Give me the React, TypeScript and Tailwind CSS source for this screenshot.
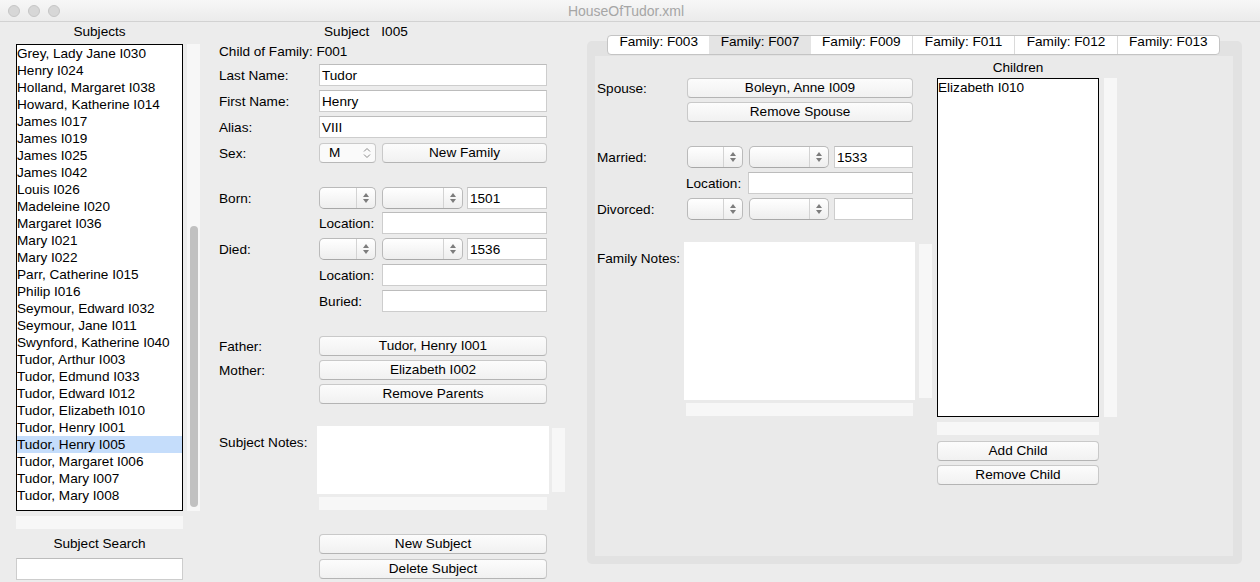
import React from 'react';

const subjects = [
  'Grey, Lady Jane I030', 'Henry I024', 'Holland, Margaret I038', 'Howard, Katherine I014',
  'James I017', 'James I019', 'James I025', 'James I042', 'Louis I026', 'Madeleine I020',
  'Margaret I036', 'Mary I021', 'Mary I022', 'Parr, Catherine I015', 'Philip I016',
  'Seymour, Edward I032', 'Seymour, Jane I011', 'Swynford, Katherine I040', 'Tudor, Arthur I003',
  'Tudor, Edmund I033', 'Tudor, Edward I012', 'Tudor, Elizabeth I010', 'Tudor, Henry I001',
  'Tudor, Henry I005', 'Tudor, Margaret I006', 'Tudor, Mary I007', 'Tudor, Mary I008',
];

const tabs = ['Family: F003', 'Family: F007', 'Family: F009', 'Family: F011', 'Family: F012', 'Family: F013'];

const Button = ({ label, className = '' }: { label: string; className?: string }) => (
  <div className={'h-[20px] flex items-center justify-center rounded-[4px] border border-[#c9c9c9] border-b-[#b4b4b4] bg-linear-to-b from-[#fcfcfc] to-[#f1f1f1] leading-none pb-[1px] ' + className}>
    {label}
  </div>
);

const Field = ({ value = '', className = '' }: { value?: string; className?: string }) => (
  <div className={'h-[22px] bg-white border border-[#cdcdcd] border-t-[#bcbcbc] pl-[2px] flex items-center ' + className}>
    {value}
  </div>
);

// stepper-style combo used for day / month
const Spin = ({ className = '' }: { className?: string }) => (
  <div className={'h-[22px] rounded-[5px] border border-[#bababa] border-b-[#a8a8a8] bg-linear-to-b from-white to-[#eeeeee] flex justify-end ' + className}>
    <div className="w-[19px] border-l border-[#d3d3d3] flex flex-col items-center justify-center gap-[2px]">
      <svg width="6" height="4" viewBox="0 0 6 4"><path d="M3 0L6 4H0z" fill="#7c7c7c" /></svg>
      <svg width="6" height="4" viewBox="0 0 6 4"><path d="M0 0H6L3 4z" fill="#7c7c7c" /></svg>
    </div>
  </div>
);

const Row = ({ label, children, className = '' }: { label: string; children?: React.ReactNode; className?: string }) => (
  <div className={'flex items-center h-[22px] ' + className}>
    <div className="w-[100px] shrink-0">{label}</div>
    {children}
  </div>
);

const Track = ({ className = '' }: { className?: string }) => <div className={'bg-[#f7f7f7] ' + className} />;

export default function App() {
  return (
    <div className="w-[1260px] h-[582px] overflow-hidden bg-[#ececec] text-black text-[13.6px] leading-[17px] font-['Liberation_Sans',Arial,sans-serif]">
      {/* Title bar */}
      <div className="h-[22px] grid grid-cols-[1fr_auto_1fr] items-center border-b border-[#d2d2d2] bg-linear-to-b from-[#f7f7f7] to-[#ebebeb]">
        <div className="flex gap-[8px] pl-[8px]">
          <div className="w-[12px] h-[12px] rounded-full bg-[#d7d7d7] border border-[#c6c6c6]" />
          <div className="w-[12px] h-[12px] rounded-full bg-[#d7d7d7] border border-[#c6c6c6]" />
          <div className="w-[12px] h-[12px] rounded-full bg-[#d7d7d7] border border-[#c6c6c6]" />
        </div>
        <div className="text-[14px] text-[#a6a6a6] pt-[1px] pr-[8px]">HouseOfTudor.xml</div>
        <div />
      </div>

      <div className="flex items-start">
        {/* Subjects column */}
        <div className="ml-[16px] w-[184px] flex flex-col">
          <div className="w-[167px] h-[22px] leading-[20px] text-center">Subjects</div>
          <div className="flex">
            <div className="w-[167px] h-[467px] bg-white border border-black overflow-hidden">
              {subjects.map((s, i) => (
                <div key={i} className={'h-[17px] leading-[17px] whitespace-nowrap ' + (i === 23 ? 'bg-[#c5ddfb]' : '')}>
                  {s}
                </div>
              ))}
            </div>
            <div className="ml-[4px] w-[13px] h-[467px] bg-[#f7f7f7] flex flex-col items-center">
              <div className="mt-[182px] w-[8px] h-[281px] rounded-full bg-[#c1c1c1]" />
            </div>
          </div>
          <Track className="mt-[5px] w-[167px] h-[13px]" />
          <div className="w-[167px] h-[29px] pt-[7px] leading-[16px] text-center">Subject Search</div>
          <div className="w-[167px] h-[22px] bg-white border border-[#cdcdcd] border-t-[#bcbcbc]" />
        </div>

        {/* Subject form */}
        <div className="ml-[19px] w-[346px] flex flex-col">
          <div className="h-[22px] leading-[20px] pl-[105px]">
            Subject<span className="ml-[12px]">I005</span>
          </div>
          <div className="h-[20px] leading-[16px]">Child of Family: F001</div>
          <Row label="Last Name:"><Field value="Tudor" className="w-[228px]" /></Row>
          <Row label="First Name:" className="mt-[4px]"><Field value="Henry" className="w-[228px]" /></Row>
          <Row label="Alias:" className="mt-[4px]"><Field value="VIII" className="w-[228px]" /></Row>
          <Row label="Sex:" className="mt-[4px]">
            <div className="w-[57px] h-[20px] rounded-[4px] border border-[#cacaca] border-b-[#b8b8b8] bg-[#fafafa] flex items-center justify-between pl-[9px] pr-[4px]">
              <span className="leading-none">M</span>
              <svg width="8" height="12" viewBox="0 0 8 12" fill="none" stroke="#8a8a8a" strokeWidth="1">
                <path d="M1 4.5L4 1.5L7 4.5" />
                <path d="M1 7.5L4 10.5L7 7.5" />
              </svg>
            </div>
            <Button label="New Family" className="ml-[6px] w-[165px]" />
          </Row>

          <Row label="Born:" className="mt-[23px]">
            <Spin className="w-[57px]" />
            <Spin className="ml-[6px] w-[81px]" />
            <Field value="1501" className="ml-[4px] w-[80px]" />
          </Row>
          <Row label="" className="mt-[3px]">
            <div className="w-[63px]">Location:</div>
            <Field className="w-[165px]" />
          </Row>
          <Row label="Died:" className="mt-[4px]">
            <Spin className="w-[57px]" />
            <Spin className="ml-[6px] w-[81px]" />
            <Field value="1536" className="ml-[4px] w-[80px]" />
          </Row>
          <Row label="" className="mt-[4px]">
            <div className="w-[63px]">Location:</div>
            <Field className="w-[165px]" />
          </Row>
          <Row label="" className="mt-[4px]">
            <div className="w-[63px]">Buried:</div>
            <Field className="w-[165px]" />
          </Row>

          <div className="flex items-center mt-[24px]">
            <div className="w-[100px]">Father:</div>
            <Button label="Tudor, Henry I001" className="w-[228px]" />
          </div>
          <div className="flex items-center mt-[4px]">
            <div className="w-[100px]">Mother:</div>
            <Button label="Elizabeth I002" className="w-[228px]" />
          </div>
          <Button label="Remove Parents" className="mt-[4px] ml-[100px] w-[228px]" />

          <div className="flex items-start mt-[22px]">
            <div className="w-[98px] pt-[8px]">Subject Notes:</div>
            <div className="w-[232px] h-[68px] bg-white" />
            <Track className="ml-[3px] mt-[2px] w-[13px] h-[64px]" />
          </div>
          <Track className="ml-[100px] mt-[3px] w-[228px] h-[13px]" />

          <Button label="New Subject" className="mt-[24px] ml-[100px] w-[228px]" />
          <Button label="Delete Subject" className="mt-[5px] ml-[100px] w-[228px]" />
        </div>

        {/* Family tabs */}
        <div className="ml-[22px] w-[655px] flex flex-col">
          <div className="mt-[13px] ml-[20px] w-[613px] h-[20px] flex relative z-10 bg-white border border-[#c4c4c4] rounded-[4px] overflow-hidden">
            {tabs.map((t, i) => (
              <div
                key={t}
                className={'flex-1 text-center leading-[12px] whitespace-nowrap ' + (i === 1 ? 'bg-[#e4e4e4] ' : '') + (i > 2 ? 'border-l border-[#dadada]' : '')}
              >
                {t}
              </div>
            ))}
          </div>
          <div className="-mt-[14px] h-[523px] rounded-[5px] bg-[#e2e2e2] pt-[15px] pl-[8px] pr-[9px] pb-[8px]">
            <div className="h-full bg-[#eaeaea] flex">
              {/* spouse / dates / notes */}
              <div className="w-[342px] pl-[2px] flex flex-col">
                <div className="flex items-center mt-[22px]">
                  <div className="w-[90px]">Spouse:</div>
                  <Button label="Boleyn, Anne I009" className="w-[226px]" />
                </div>
                <Button label="Remove Spouse" className="mt-[4px] ml-[90px] w-[226px]" />

                <div className="flex items-center h-[22px] mt-[24px]">
                  <div className="w-[90px]">Married:</div>
                  <Spin className="w-[56px]" />
                  <Spin className="ml-[6px] w-[80px]" />
                  <Field value="1533" className="ml-[5px] w-[79px]" />
                </div>
                <div className="flex items-center h-[22px] mt-[4px]">
                  <div className="w-[89px]" />
                  <div className="w-[62px]">Location:</div>
                  <Field className="w-[165px]" />
                </div>
                <div className="flex items-center h-[22px] mt-[4px]">
                  <div className="w-[90px]">Divorced:</div>
                  <Spin className="w-[56px]" />
                  <Spin className="ml-[6px] w-[80px]" />
                  <Field className="ml-[5px] w-[79px]" />
                </div>

                <div className="flex items-start mt-[22px]">
                  <div className="w-[87px] pt-[8px]">Family Notes:</div>
                  <div className="w-[231px] h-[158px] bg-white" />
                  <Track className="ml-[4px] mt-[2px] w-[13px] h-[154px]" />
                </div>
                <Track className="ml-[89px] mt-[3px] w-[227px] h-[13px]" />
              </div>

              {/* children */}
              <div className="flex flex-col">
                <div className="w-[162px] h-[22px] flex items-center justify-center">Children</div>
                <div className="flex">
                  <div className="w-[162px] h-[339px] bg-white border border-black">
                    <div className="h-[17px] leading-[17px]">Elizabeth I010</div>
                  </div>
                  <Track className="ml-[5px] w-[13px] h-[339px]" />
                </div>
                <Track className="mt-[5px] w-[162px] h-[13px]" />
                <Button label="Add Child" className="mt-[6px] w-[162px]" />
                <Button label="Remove Child" className="mt-[4px] w-[162px]" />
              </div>
            </div>
          </div>
        </div>
      </div>
    </div>
  );
}
